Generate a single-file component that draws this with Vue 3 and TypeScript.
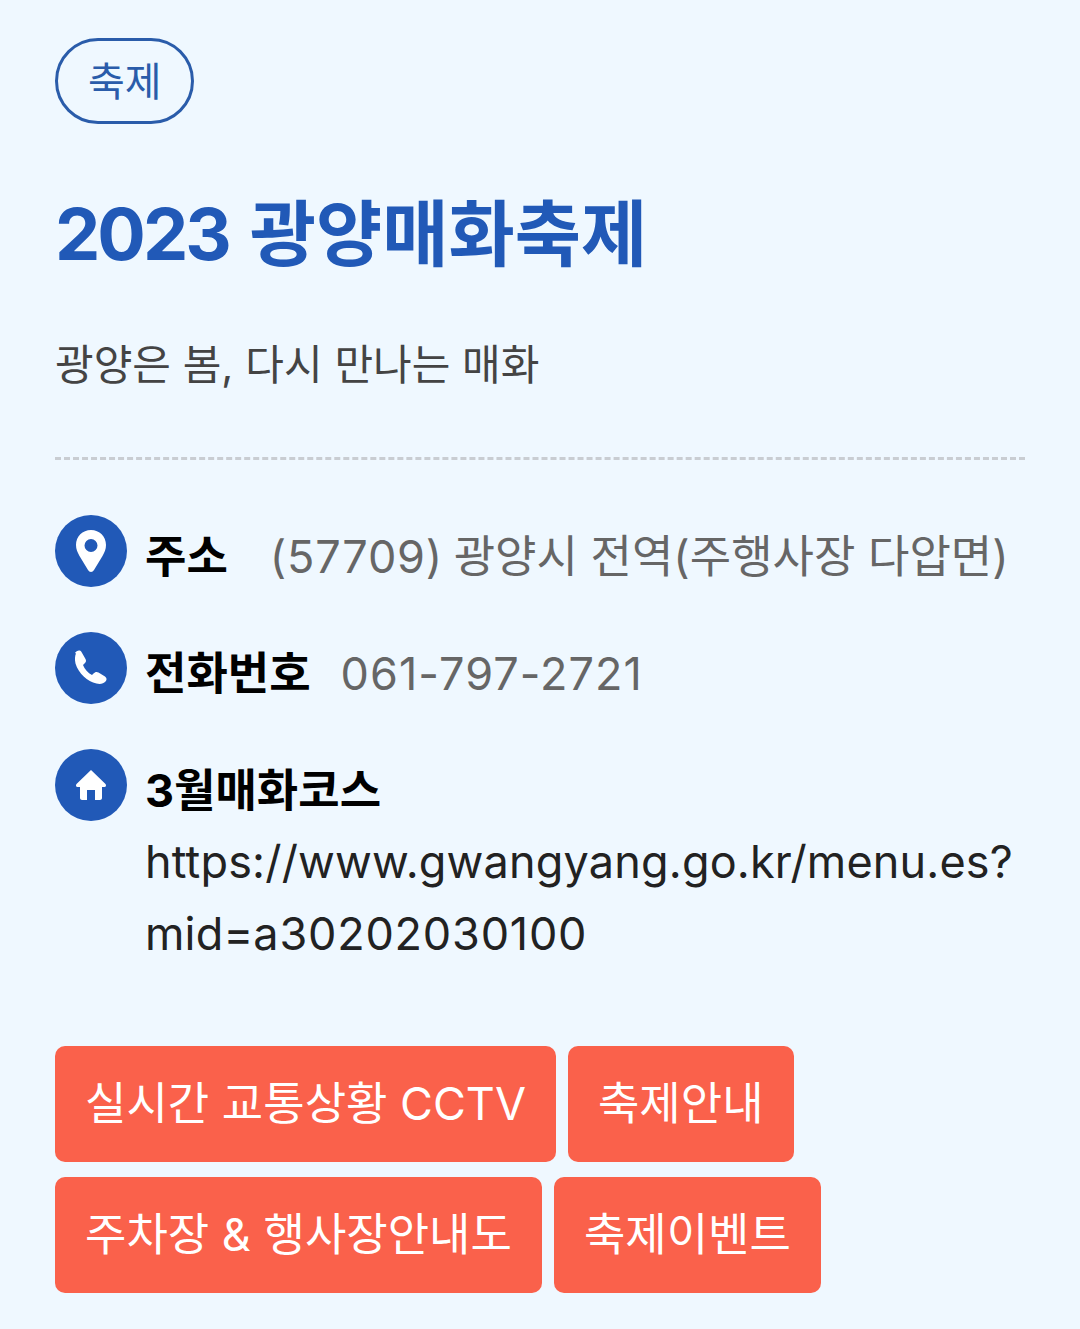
<template>
  <main class="page">
    <span class="tag">축제</span>
    <h1 class="title"><span class="year">2023</span> 광양매화축제</h1>
    <p class="desc">광양은 봄, 다시 만나는 매화</p>
    <hr class="divider" />

    <ul class="info">
      <li class="row">
        <span class="icon">
          <svg viewBox="0 0 72 72" width="72" height="72">
            <path fill="#fff" fill-rule="evenodd" d="M36 15c-8.500 0-15 6.500-15 15 0 4 1.500 7.500 3.500 11L33 55c1.500 2.500 4.500 2.500 6 0l8.500-14c2-3.500 3.500-7 3.500-11 0-8.500-6.500-15-15-15zm0 9a6.500 6.500 0 1 1 0 13 6.500 6.500 0 0 1 0-13z" />
          </svg>
        </span>
        <div class="text"><b class="label addr">주소</b><span class="muted"><span class="num zip">(57709)</span> 광양시 전역(주행사장 다압면)</span></div>
      </li>
      <li class="row">
        <span class="icon">
          <svg viewBox="0 0 72 72" width="72" height="72">
            <path fill="#fff" d="M20 21c1.500-2.500 5-3.500 6.500-1l4 7c1 2 .5 3-1 4.500L28 33c1.500 4 5 8 9 10l1.500-1.500c1.500-1.500 3-2 5-1l6.500 4c2 1.500 2 3.500 .5 5-2 2-5 3-9 2-9-2-18-10-21-20-1-4-.5-8 .5-10z" />
          </svg>
        </span>
        <div class="text"><b class="label">전화번호</b><span class="muted tel">061-797-2721</span></div>
      </li>
      <li class="row">
        <span class="icon">
          <svg viewBox="0 0 72 72" width="72" height="72">
            <path fill="#fff" d="M36 21 21.500 35c-1 1-.5 3 1 3H25v11c0 1 1 2 2 2h5V41h8v10h5c1 0 2-1 2-2V38h2.500c1.500 0 2-2 1-3z" />
          </svg>
        </span>
        <div class="text link"><b class="label block">3월매화코스</b>https://www.gwangyang.go.kr/menu.es?<wbr />mid=<span class="num">a30202030100</span></div>
      </li>
    </ul>

    <nav class="btns">
      <a v-for="b in buttons" :key="b" class="btn">{{ b }}</a>
    </nav>
  </main>
</template>

<script setup lang="ts">
const buttons: string[] = [
  "실시간 교통상황 CCTV",
  "축제안내",
  "주차장 & 행사장안내도",
  "축제이벤트",
];
</script>

<style>
html,
body {
  margin: 0;
  background: #eff8ff;
}
</style>

<style scoped>
.page {
  box-sizing: border-box;
  min-height: 1329px;
  padding: 38px 55px 0;
  background: #eff8ff;
  font-family: Inter, "Noto Sans CJK KR", sans-serif;
}

.tag {
  display: inline-block;
  box-sizing: border-box;
  height: 86px;
  padding: 0 29px 0 30px;
  border: 3px solid #2a5caa;
  border-radius: 43px;
  color: #2a5caa;
  font-size: 40px;
  line-height: 82px;
}

.title {
  margin: 65px 0 0;
  color: #2159b7;
  font-size: 72px;
  font-weight: 700;
  line-height: 90px;
}

.year {
  margin-right: 4px;
  letter-spacing: -3px;
}

.desc {
  margin: 56px 0 0;
  color: #444;
  font-size: 42px;
  line-height: 60px;
}

.divider {
  margin: 62px 0 0;
  border: 0;
  border-top: 3px dashed #c9cdd2;
}

.info {
  margin: 55px 0 0;
  padding: 0;
  list-style: none;
}

.row {
  display: flex;
  gap: 18px;
  margin-bottom: 39px;
}

.icon {
  flex: none;
  width: 72px;
  height: 72px;
  border-radius: 50%;
  background: #2159b7;
}

.icon svg {
  display: block;
}

.text {
  min-width: 0;
  padding-top: 6px;
  font-size: 45px;
  line-height: 72px;
}

.label {
  margin-right: 30px;
  color: #000;
  font-weight: 700;
}

.addr {
  margin-right: 42px;
}

.block {
  display: block;
  margin: 0 0 -1px;
  letter-spacing: 0;
}

.muted {
  color: #666;
}

.num {
  letter-spacing: 0.8px;
}

.zip {
  margin-right: -2px;
}

.tel {
  letter-spacing: 1.05px;
}

.link {
  color: #222;
  letter-spacing: 0.17px;
}

.btns {
  display: flex;
  flex-wrap: wrap;
  gap: 15px 12px;
  margin-top: 76px;
}

.btn {
  box-sizing: border-box;
  height: 116px;
  padding: 0 30px;
  border-radius: 10px;
  background: #fa614b;
  color: #fff;
  font-size: 45px;
  line-height: 116px;
}
</style>
